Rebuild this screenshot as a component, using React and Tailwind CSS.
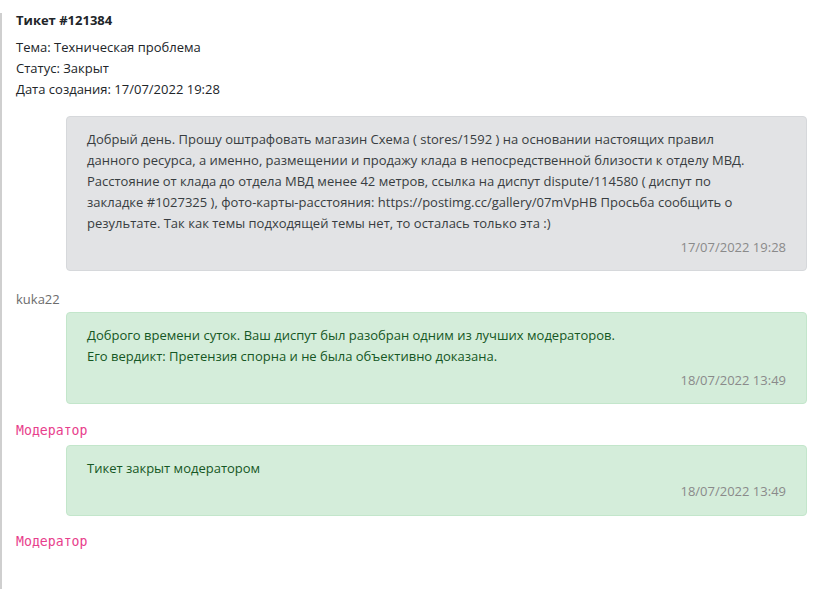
export default function App() {
  const font = { fontFamily: '"Open Sans", "Noto Sans", sans-serif' };
  const mono = { fontFamily: '"DejaVu Sans Mono", monospace' };
  return (
    <div className="bg-white w-[819px] h-[589px] overflow-hidden pt-[13px]" style={font}>
      <div className="border-l-[2px] border-[#cfcfcf] h-[600px] pl-[14px] pr-[12px] text-[13px] text-[#212529]">
        <div className="font-bold text-[13px] leading-[15px]">Тикет #121384</div>
        <div className="mt-[9px] leading-[21px]">
          <div>Тема: Техническая проблема</div>
          <div>Статус: Закрыт</div>
          <div>Дата создания: 17/07/2022 19:28</div>
        </div>

        <div className="ml-[50px] mt-[16px] bg-[#e2e3e5] border border-[#d6d8db] rounded-[4px] text-[#383d41] pl-[20px] pr-[20px] pt-[12px] pb-[12px] leading-[21px]">
          <div className="max-w-[680px]">
            Добрый день. Прошу оштрафовать магазин Схема ( stores/1592 ) на основании настоящих правил данного ресурса, а именно, размещении и продажу клада в непосредственной близости к отделу МВД. Расстояние от клада до отдела МВД менее 42 метров, ссылка на диспут dispute/114580 ( диспут по закладке #1027325 ), фото-карты-расстояния: https://postimg.cc/gallery/07mVpHB Просьба сообщить о результате. Так как темы подходящей темы нет, то осталась только эта :)
          </div>
          <div className="text-right text-[#8a8a8a] mt-[3px]">17/07/2022 19:28</div>
        </div>

        <div className="mt-[18px] text-[#6c6c6c] leading-[21px]">kuka22</div>

        <div className="ml-[50px] mt-[2px] bg-[#d4edda] border border-[#c3e6cb] rounded-[4px] text-[#155724] pl-[20px] pr-[20px] pt-[12px] pb-[12px] leading-[21px]">
          <div>Доброго времени суток. Ваш диспут был разобран одним из лучших модераторов.</div>
          <div>Его вердикт: Претензия спорна и не была объективно доказана.</div>
          <div className="text-right text-[#8a8a8a] mt-[3px]">18/07/2022 13:49</div>
        </div>

        <div className="mt-[16px] leading-[21px] text-[#e83e8c] text-[13.2px]" style={mono}>Модератор</div>

        <div className="ml-[50px] mt-[4px] bg-[#d4edda] border border-[#c3e6cb] rounded-[4px] text-[#155724] pl-[20px] pr-[20px] pt-[12px] pb-[13px] leading-[21px]">
          <div>Тикет закрыт модератором</div>
          <div className="text-right text-[#8a8a8a] mt-[2px]">18/07/2022 13:49</div>
        </div>

        <div className="mt-[15px] leading-[21px] text-[#e83e8c] text-[13.2px]" style={mono}>Модератор</div>
      </div>
    </div>
  );
}
